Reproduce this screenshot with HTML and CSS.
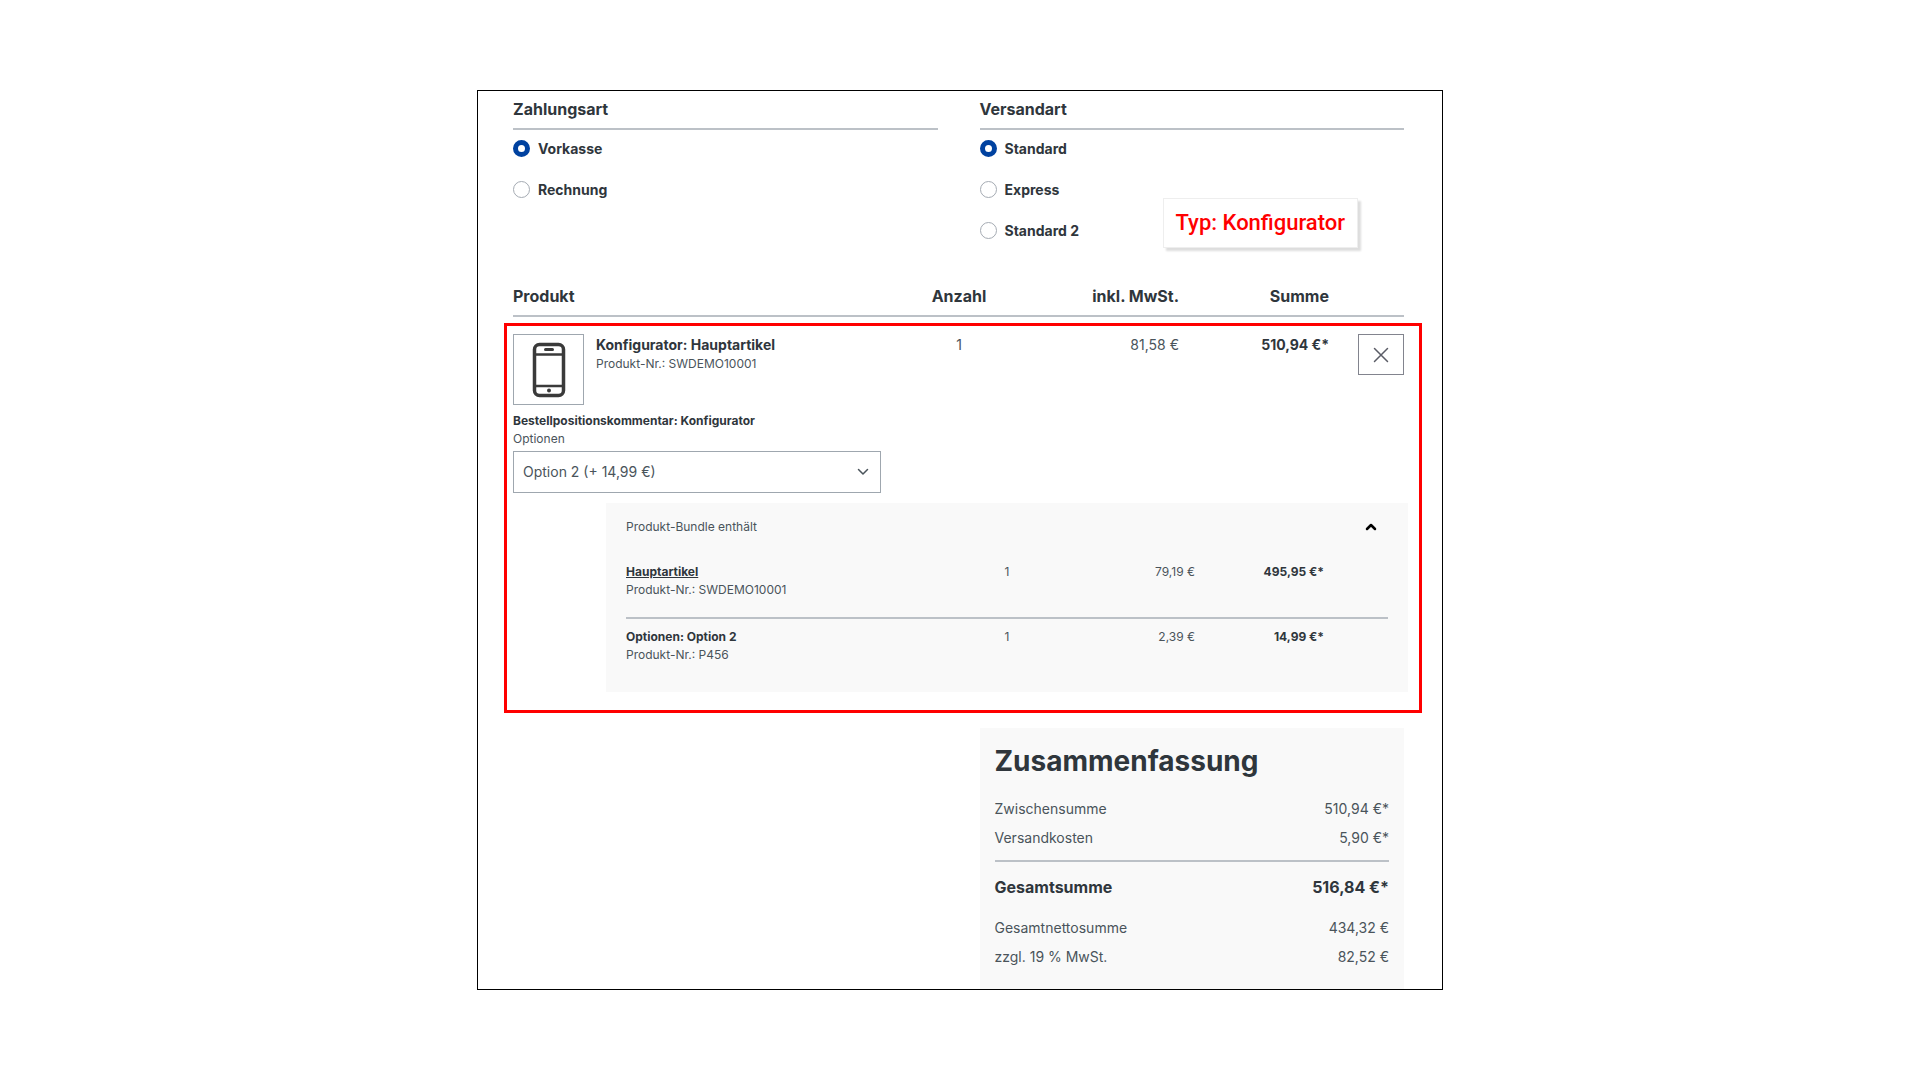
FILE: index.html
```html
<!DOCTYPE html>
<html lang="de">
<head>
<meta charset="utf-8">
<meta name="viewport" content="width=device-width, initial-scale=1">
<title>Bestellung abschließen</title>
<link rel="stylesheet" href="styles.css">
</head>
<body>
<main class="checkout">
  <form class="methods">
    <fieldset class="method">
      <legend class="method-title">Zahlungsart</legend>
      <div class="options">
        <label class="option"><input type="radio" name="payment" checked>Vorkasse</label>
        <label class="option"><input type="radio" name="payment">Rechnung</label>
      </div>
    </fieldset>
    <fieldset class="method">
      <legend class="method-title">Versandart</legend>
      <div class="options">
        <label class="option"><input type="radio" name="shipping" checked>Standard</label>
        <label class="option"><input type="radio" name="shipping">Express</label>
        <label class="option"><input type="radio" name="shipping">Standard 2</label>
      </div>
    </fieldset>
    <div class="type-note">Typ: Konfigurator</div>
  </form>

  <section class="cart">
    <table class="cart-table">
      <colgroup><col><col class="c-qty"><col class="c-tax"><col class="c-sum"><col class="c-action"></colgroup>
      <thead>
        <tr><th class="name">Produkt</th><th class="qty">Anzahl</th><th>inkl. MwSt.</th><th>Summe</th><th></th></tr>
      </thead>
      <tbody>
        <tr class="item">
          <td class="name">
            <div class="product">
              <div class="thumb">
                <svg width="34" height="56" viewBox="0 0 34 56" fill="none" stroke="#3a3a3a" stroke-width="3.500" aria-hidden="true">
                  <rect x="2.500" y="2.500" width="29" height="51" rx="5"/>
                  <path d="M3 12.500H31M3 44H31" stroke-width="2.500"/>
                  <path d="M13.500 7.500H20.500" stroke-width="3" stroke-linecap="round"/>
                  <circle cx="17" cy="48.500" r="2" fill="#3a3a3a" stroke="none"/>
                </svg>
              </div>
              <div>
                <div class="product-title">Konfigurator: Hauptartikel</div>
                <div class="product-number">Produkt-Nr.: SWDEMO10001</div>
              </div>
            </div>
          </td>
          <td class="qty">1</td>
          <td>81,58 €</td>
          <td class="strong">510,94 €*</td>
          <td>
            <button class="remove" type="button" aria-label="Entfernen">
              <svg width="16" height="16" viewBox="0 0 16 16" fill="none" stroke="#5a5c66" stroke-width="1.500" stroke-linecap="round" aria-hidden="true"><path d="M1.500 1.500L14.500 14.500M14.500 1.500L1.500 14.500"/></svg>
            </button>
          </td>
        </tr>
        <tr>
          <td class="name" colspan="5">
            <div class="comment">Bestellpositionskommentar: Konfigurator</div>
            <label class="select-label" for="variant">Optionen</label>
            <div class="select-box">
              <select id="variant"><option>Option 2 (+ 14,99 €)</option></select>
              <svg class="chevron" width="12" height="8" viewBox="0 0 12 8" fill="none" stroke="#4a545b" stroke-width="1.500" stroke-linecap="round" stroke-linejoin="round" aria-hidden="true"><path d="M1.500 1.500L6 6L10.500 1.500"/></svg>
            </div>
          </td>
        </tr>
      </tbody>
    </table>

    <div class="bundle">
      <div class="bundle-head">
        <span>Produkt-Bundle enthält</span>
        <button class="toggle" type="button" aria-label="Bundle einklappen">
          <svg width="12" height="8" viewBox="0 0 12 8" fill="none" stroke="#000" stroke-width="2.500" stroke-linecap="round" stroke-linejoin="round" aria-hidden="true"><path d="M2 6L6 2L10 6"/></svg>
        </button>
      </div>
      <table class="bundle-table">
        <colgroup><col><col class="b-qty"><col class="b-tax"><col class="b-sum"><col class="b-action"></colgroup>
        <tbody>
          <tr>
            <td class="name"><a class="bundle-title" href="#">Hauptartikel</a><div>Produkt-Nr.: SWDEMO10001</div></td>
            <td class="qty">1</td><td>79,19 €</td><td class="strong">495,95 €*</td><td></td>
          </tr>
          <tr>
            <td class="name"><span class="bundle-title">Optionen: Option 2</span><div>Produkt-Nr.: P456</div></td>
            <td class="qty">1</td><td>2,39 €</td><td class="strong">14,99 €*</td><td></td>
          </tr>
        </tbody>
      </table>
    </div>
    <div class="highlight"></div>
  </section>

  <aside class="summary">
    <h2>Zusammenfassung</h2>
    <dl>
      <div class="line"><dt>Zwischensumme</dt><dd>510,94 €*</dd></div>
      <div class="line"><dt>Versandkosten</dt><dd>5,90 €*</dd></div>
      <div class="line total"><dt>Gesamtsumme</dt><dd>516,84 €*</dd></div>
      <div class="line"><dt>Gesamtnettosumme</dt><dd>434,32 €</dd></div>
      <div class="line"><dt>zzgl. 19 % MwSt.</dt><dd>82,52 €</dd></div>
    </dl>
  </aside>
</main>
</body>
</html>
```
FILE: styles.css
```css
:root {
  --line: #bcc1c7;
  --text: #4a545b;
  --dark: #2f363c;
  --panel: #f9f9f9;
}

* { box-sizing: border-box; }

body {
  margin: 0;
  padding: 90px 24px;
  background: #fff;
  color: var(--text);
  font: 14px/22px Inter, "Liberation Sans", sans-serif;
}

.checkout {
  max-width: 966px;
  margin: 0 auto;
  padding: 6px 38px 0 35px;
  border: 1px solid #000;
}

/* Payment and shipping */
.methods {
  position: relative;
  display: grid;
  grid-template-columns: 1fr 1fr;
  gap: 42px;
}

.method {
  min-width: 0;
  margin: 0;
  padding: 0;
  border: 0;
}

.method-title {
  width: 100%;
  padding: 0 0 7px;
  border-bottom: 2px solid var(--line);
  color: var(--dark);
  font-size: 16px;
  font-weight: 700;
  line-height: 24px;
}

.options {
  display: flex;
  flex-direction: column;
  gap: 20px;
  padding-top: 8px;
}

.option {
  display: flex;
  align-items: center;
  gap: 8px;
  color: var(--dark);
  font-weight: 700;
  line-height: 21px;
}

.option input {
  appearance: none;
  width: 17px;
  height: 17px;
  margin: 0;
  border: 1px solid #a5abb3;
  border-radius: 50%;
  background: #fff;
}

.option input:checked { border: 5px solid #0042a0; }

.type-note {
  position: absolute;
  top: 101px;
  right: 46px;
  padding: 12px;
  border: 1px solid #eee;
  background: #fff;
  box-shadow: 3px 3px 2px #ddd;
  color: #f00;
  font: 500 22px/24px Roboto, sans-serif;
}

/* Cart */
.cart {
  position: relative;
  margin-top: 43px;
  padding-bottom: 21px;
}

table {
  width: 100%;
  border-collapse: collapse;
  table-layout: fixed;
}

.c-qty { width: 92px; }
.c-tax { width: 174px; }
.c-sum { width: 150px; }
.c-action { width: 75px; }

th, td {
  padding: 0;
  text-align: right;
  vertical-align: top;
}

th.name, td.name { text-align: left; }
th.qty, td.qty { text-align: center; }

.cart-table thead th {
  padding-bottom: 7px;
  border-bottom: 2px solid var(--line);
  color: var(--dark);
  font-size: 16px;
  font-weight: 700;
  line-height: 24px;
}

.item td { padding-top: 17px; }

.strong {
  color: var(--dark);
  font-weight: 700;
}

.product { display: flex; gap: 12px; }

.thumb {
  display: grid;
  place-items: center;
  width: 71px;
  height: 71px;
  border: 1px solid #9fa7af;
}

.product-title {
  color: var(--dark);
  font-weight: 700;
}

.product-number { font-size: 12px; line-height: 16px; }

.remove {
  display: inline-grid;
  place-items: center;
  width: 46px;
  height: 41px;
  padding: 0;
  border: 1px solid #82848e;
  background: #fff;
  vertical-align: top;
}

.comment {
  margin-top: 7px;
  color: var(--dark);
  font-size: 12px;
  font-weight: 700;
  line-height: 18px;
}

.select-label { display: block; font-size: 12px; line-height: 18px; }

.select-box {
  position: relative;
  max-width: 368px;
  margin-top: 3px;
}

.select-box select {
  appearance: none;
  display: block;
  width: 100%;
  height: 42px;
  padding: 0 9px;
  border: 1px solid #9fa7af;
  border-radius: 0;
  background: #fff;
  color: var(--text);
  font: inherit;
}

.chevron {
  position: absolute;
  top: 17px;
  right: 12px;
  pointer-events: none;
}

/* Bundle contents */
.bundle {
  margin: 10px -4px 0 93px;
  padding: 15px 20px 28px;
  background: var(--panel);
  font-size: 12px;
  line-height: 18px;
}

.bundle-head {
  display: flex;
  justify-content: space-between;
  margin-bottom: 18px;
}

.toggle {
  display: grid;
  place-items: center;
  width: 34px;
  height: 18px;
  padding: 0;
  border: 0;
  background: none;
}

.b-qty { width: 88px; }
.b-tax { width: 144px; }
.b-sum { width: 129px; }
.b-action { width: 64px; }

.bundle-table td { padding-top: 9px; }
.bundle-table tr:first-child td { padding-bottom: 18px; }
.bundle-table tr + tr { border-top: 2px solid var(--line); }

.bundle-title {
  color: var(--dark);
  font-weight: 700;
}

/* Marker around the configured item */
.highlight {
  position: absolute;
  inset: 39px -18px 0 -9px;
  border: 3px solid #f00;
  pointer-events: none;
}

/* Order summary */
.summary {
  width: calc(50% - 21px);
  margin: 15px 0 0 auto;
  padding: 16px 15px 22px;
  background: var(--panel);
}

.summary h2 {
  margin: 0 0 20px;
  color: var(--dark);
  font-size: 28px;
  font-weight: 700;
  line-height: 34px;
}

.summary dl {
  display: flex;
  flex-direction: column;
  gap: 8px;
  margin: 0;
}

.line {
  display: flex;
  justify-content: space-between;
  line-height: 21px;
}

.line dd { margin: 0; }

.total {
  margin: 4px 0 10px;
  padding-top: 13px;
  border-top: 2px solid var(--line);
  color: var(--dark);
  font-size: 16px;
  font-weight: 700;
  line-height: 24px;
}
```
